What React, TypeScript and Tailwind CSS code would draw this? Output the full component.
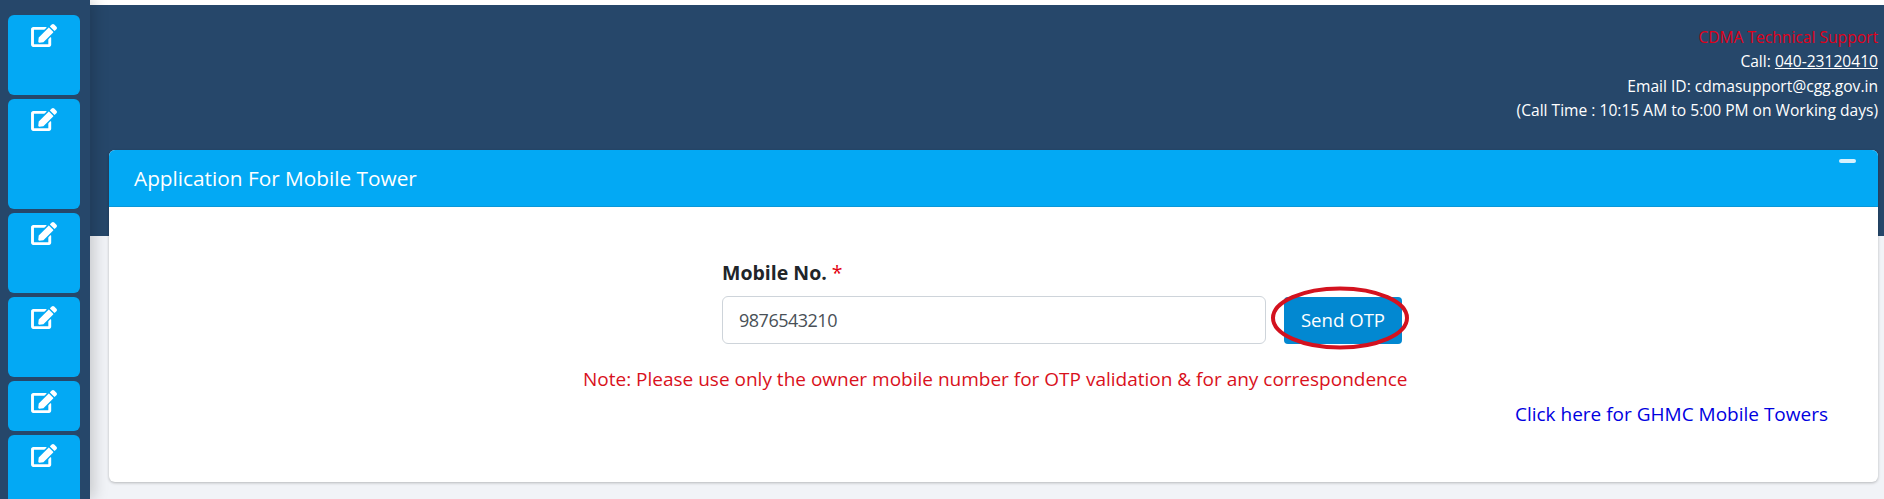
import React from 'react';
import { FaEdit } from 'react-icons/fa';

const tileClasses = ['h-[80px]', 'h-[110px]', 'h-[80px]', 'h-[80px]', 'h-[50px]', 'h-[80px]'];

export default function App() {
  return (
    <div className="flex h-[499px] overflow-hidden bg-[#f1f3f7] font-['Open_Sans','Noto_Sans',sans-serif] text-[16px] text-[#212529]">
      <aside className="z-10 flex w-[90px] shrink-0 flex-col gap-1 bg-[#26476a] pl-2 pr-[10px] pt-[15px] shadow-[4px_0_14px_rgba(0,0,0,0.18)]">
        {tileClasses.map((h, i) => (
          <div key={i} className={`${h} flex shrink-0 justify-center rounded-md bg-[#03a9f4] pt-[9px]`}>
            <FaEdit className="h-[23px] w-[26px] text-white" />
          </div>
        ))}
      </aside>

      <main className="min-w-0 flex-1">
        <div className="h-[5px] bg-white" />
        <header className="h-[231px] bg-[#26476a] pr-[6px] pt-[20px] text-right text-[15.6px] leading-[24.4px] text-white">
          <div className="text-[#e0001a]">CDMA Technical Support</div>
          <div>
            Call: <a className="underline">040-23120410</a>
          </div>
          <div>Email ID: cdmasupport@cgg.gov.in</div>
          <div>(Call Time : 10:15 AM to 5:00 PM on Working days)</div>
        </header>

        <section className="ml-[19px] mr-[6px] -mt-[86px] h-[332px] rounded-md bg-white shadow-[0_1px_3px_rgba(0,0,0,0.25)]">
          <div className="flex h-[57px] items-center justify-between rounded-t-md border-b border-[#0a97d8] bg-[#03a9f4] pl-[25px] pr-[22px] text-white">
            <h3 className="pt-[2px] text-[20.8px]">Application For Mobile Tower</h3>
            <span className="mb-[34px] h-[4px] w-[17px] rounded-sm bg-[#d6f1fd]" />
          </div>

          <div className="pl-[613px] pt-[52px]">
            <label className="block text-[19.5px] font-bold leading-[28px]">
              Mobile No. <span className="font-normal text-[#e3000f]">*</span>
            </label>
            <div className="mt-[9px] flex items-center">
              <input
                readOnly
                value="9876543210"
                className="h-[48px] w-[544px] rounded-md border border-[#ced4da] bg-white px-4 text-[18px] tracking-[-0.5px] text-[#495057]"
              />
              <div className="relative ml-[18px]">
                <button className="h-[47px] w-[118px] rounded-sm bg-[#0288d1] text-[18.6px] text-white">Send OTP</button>
                <svg className="absolute -left-[14px] -top-[11px]" width="140" height="64" viewBox="0 0 140 64" fill="none">
                  <ellipse cx="70" cy="32" rx="67" ry="29.5" stroke="#d3121f" strokeWidth="4" />
                </svg>
              </div>
            </div>
          </div>

          <p className="mt-[23px] pl-[474px] text-[19px] leading-[24px] text-[#d9111c]">
            Note: Please use only the owner mobile number for OTP validation &amp; for any correspondence
          </p>
          <div className="mt-[11px] pr-[50px] text-right">
            <a className="text-[19px] leading-[24px] text-[#0000e0]">Click here for GHMC Mobile Towers</a>
          </div>
        </section>
      </main>
    </div>
  );
}
